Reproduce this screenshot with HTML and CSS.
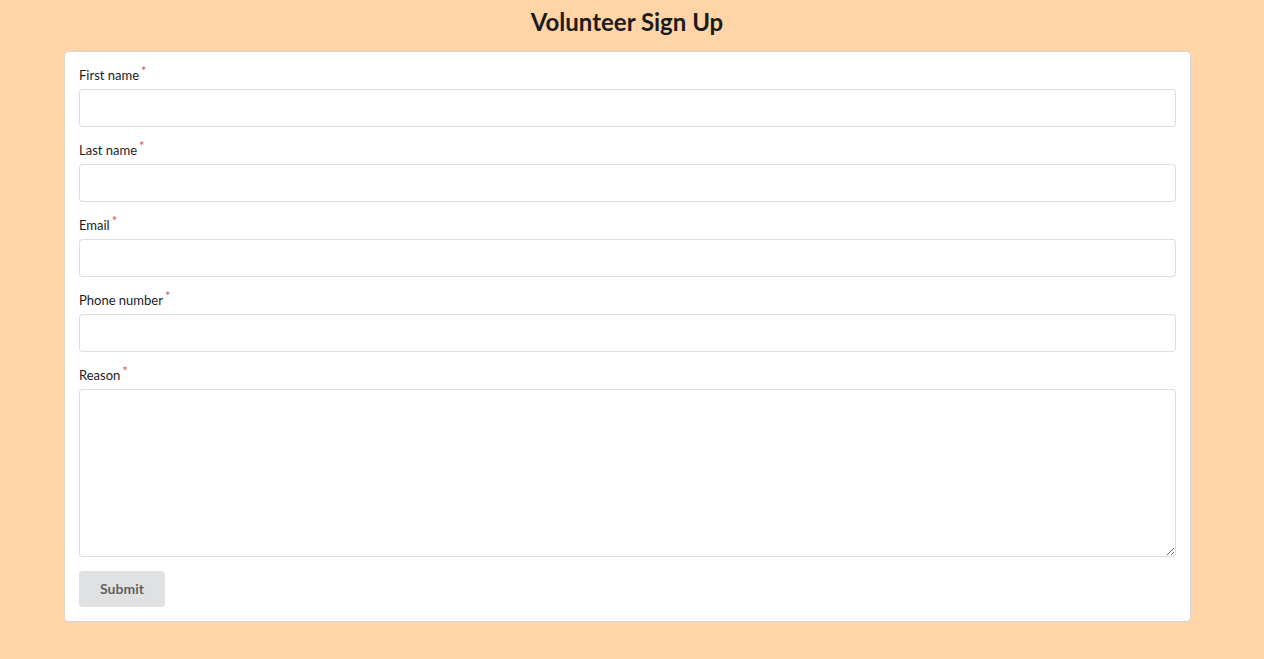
FILE: index.html
```html
<!DOCTYPE html>
<html lang="en">
<head>
<meta charset="utf-8">
<title>Volunteer Sign Up</title>
<link rel="stylesheet" href="styles.css">
</head>
<body>
<h1 class="title">Volunteer Sign Up</h1>
<form class="card">
  <div class="field">
    <label class="label">First name</label>
    <input class="input" type="text">
  </div>
  <div class="field">
    <label class="label">Last name</label>
    <input class="input" type="text">
  </div>
  <div class="field">
    <label class="label">Email</label>
    <input class="input" type="text">
  </div>
  <div class="field">
    <label class="label">Phone number</label>
    <input class="input" type="text">
  </div>
  <div class="field">
    <label class="label">Reason</label>
    <textarea class="input textarea"></textarea>
  </div>
  <button class="submit" type="button">Submit</button>
</form>
</body>
</html>
```
FILE: styles.css
```css
html, body {
  margin: 0;
  padding: 0;
}
body {
  background: #ffd5a8;
  font-family: Lato, "Liberation Sans", sans-serif;
  color: rgba(0, 0, 0, 0.87);
  font-size: 14px;
  height: 659px;
  overflow: hidden;
}
.title {
  margin: 0;
  padding-top: 6px;
  height: 52px;
  box-sizing: border-box;
  font-size: 24px;
  line-height: 32px;
  font-weight: 700;
  text-align: center;
  color: #1b1c1d;
  width: 1254px;
}
.card {
  margin: 0 0 0 65px;
  width: 1125px;
  box-sizing: border-box;
  background: #fff;
  border-radius: 4px;
  box-shadow: 0 1px 3px 0 #d4d4d5, 0 0 0 1px #e3d7c7;
  padding: 14px;
  display: flex;
  flex-direction: column;
}
.field {
  display: flex;
  flex-direction: column;
  margin-bottom: 14px;
}
.label {
  display: block;
  font-size: 13px;
  font-weight: 400;
  line-height: 19px;
  margin-bottom: 4px;
  color: #1b1c1d;
}
.label::after {
  content: "*";
  color: #d95c5c;
  margin-left: 2px;
  position: relative;
  top: -4px;
  font-size: 13px;
}
.input {
  display: block;
  width: 100%;
  height: 38px;
  box-sizing: border-box;
  border: 1px solid rgba(34, 36, 38, 0.15);
  border-radius: 4px;
  background: #fff;
  font-family: Lato, "Liberation Sans", sans-serif;
  font-size: 14px;
  padding: 9px 14px;
  margin: 0;
  outline: none;
}
.textarea {
  height: 168px;
  resize: vertical;
}
.submit {
  align-self: flex-start;
  width: 86px;
  height: 36px;
  background: #e0e1e2;
  color: rgba(0, 0, 0, 0.6);
  border: none;
  border-radius: 4px;
  font-family: Lato, "Liberation Sans", sans-serif;
  font-size: 14px;
  font-weight: 700;
  padding: 0 0 2px 0;
  cursor: pointer;
}
```
